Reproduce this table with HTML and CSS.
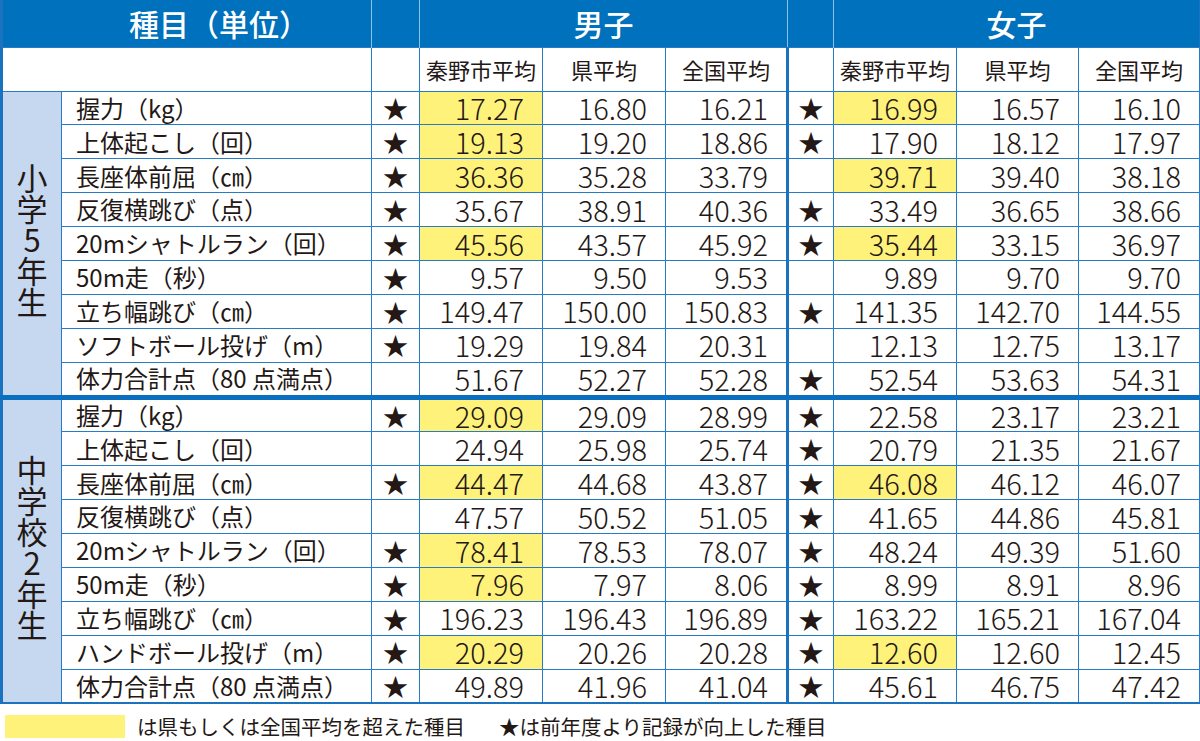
FILE: index.html
```html
<!DOCTYPE html>
<html lang="ja">
<head>
<meta charset="utf-8">
<link rel="stylesheet" href="styles.css">
</head>
<body>
<table class="grid">
  <colgroup>
    <col class="c-grp"><col class="c-name"><col class="c-star">
    <col class="c-n1"><col class="c-n2"><col class="c-n3">
    <col class="c-star2">
    <col class="c-n4"><col class="c-n5"><col class="c-n6">
  </colgroup>
  <thead>
    <tr class="hrow">
      <th colspan="2" class="h-item">種目（単位）</th>
      <th class="h-gap"></th>
      <th colspan="3" class="h-sex">男子</th>
      <th class="h-gap"></th>
      <th colspan="3" class="h-sex">女子</th>
    </tr>
    <tr class="srow">
      <td colspan="2"></td>
      <td class="star"></td>
      <td class="sub">秦野市平均</td><td class="sub">県平均</td><td class="sub">全国平均</td>
      <td class="star fstar"></td>
      <td class="sub">秦野市平均</td><td class="sub">県平均</td><td class="sub">全国平均</td>
    </tr>
  </thead>
  <tbody class="g1">
    <tr><td rowspan="9" class="grp"><span class="vt">小学5年生</span></td><td class="name">握力（kg）</td><td class="star">★</td><td class="num hl">17.27</td><td class="num">16.80</td><td class="num">16.21</td><td class="star fstar">★</td><td class="num hl">16.99</td><td class="num">16.57</td><td class="num">16.10</td></tr>
    <tr><td class="name">上体起こし（回）</td><td class="star">★</td><td class="num hl">19.13</td><td class="num">19.20</td><td class="num">18.86</td><td class="star fstar">★</td><td class="num">17.90</td><td class="num">18.12</td><td class="num">17.97</td></tr>
    <tr><td class="name">長座体前屈（㎝）</td><td class="star">★</td><td class="num hl">36.36</td><td class="num">35.28</td><td class="num">33.79</td><td class="star fstar"></td><td class="num hl">39.71</td><td class="num">39.40</td><td class="num">38.18</td></tr>
    <tr><td class="name">反復横跳び（点）</td><td class="star">★</td><td class="num">35.67</td><td class="num">38.91</td><td class="num">40.36</td><td class="star fstar">★</td><td class="num">33.49</td><td class="num">36.65</td><td class="num">38.66</td></tr>
    <tr><td class="name">20mシャトルラン（回）</td><td class="star">★</td><td class="num hl">45.56</td><td class="num">43.57</td><td class="num">45.92</td><td class="star fstar">★</td><td class="num hl">35.44</td><td class="num">33.15</td><td class="num">36.97</td></tr>
    <tr><td class="name">50m走（秒）</td><td class="star">★</td><td class="num">9.57</td><td class="num">9.50</td><td class="num">9.53</td><td class="star fstar"></td><td class="num">9.89</td><td class="num">9.70</td><td class="num">9.70</td></tr>
    <tr><td class="name">立ち幅跳び（㎝）</td><td class="star">★</td><td class="num">149.47</td><td class="num">150.00</td><td class="num">150.83</td><td class="star fstar">★</td><td class="num">141.35</td><td class="num">142.70</td><td class="num">144.55</td></tr>
    <tr><td class="name">ソフトボール投げ（m）</td><td class="star">★</td><td class="num">19.29</td><td class="num">19.84</td><td class="num">20.31</td><td class="star fstar"></td><td class="num">12.13</td><td class="num">12.75</td><td class="num">13.17</td></tr>
    <tr><td class="name">体力合計点（80 点満点）</td><td class="star"></td><td class="num">51.67</td><td class="num">52.27</td><td class="num">52.28</td><td class="star fstar">★</td><td class="num">52.54</td><td class="num">53.63</td><td class="num">54.31</td></tr>
  </tbody>
  <tbody class="g2">
    <tr><td rowspan="9" class="grp"><span class="vt">中学校2年生</span></td><td class="name">握力（kg）</td><td class="star">★</td><td class="num hl">29.09</td><td class="num">29.09</td><td class="num">28.99</td><td class="star fstar">★</td><td class="num">22.58</td><td class="num">23.17</td><td class="num">23.21</td></tr>
    <tr><td class="name">上体起こし（回）</td><td class="star"></td><td class="num">24.94</td><td class="num">25.98</td><td class="num">25.74</td><td class="star fstar">★</td><td class="num">20.79</td><td class="num">21.35</td><td class="num">21.67</td></tr>
    <tr><td class="name">長座体前屈（㎝）</td><td class="star">★</td><td class="num hl">44.47</td><td class="num">44.68</td><td class="num">43.87</td><td class="star fstar">★</td><td class="num hl">46.08</td><td class="num">46.12</td><td class="num">46.07</td></tr>
    <tr><td class="name">反復横跳び（点）</td><td class="star"></td><td class="num">47.57</td><td class="num">50.52</td><td class="num">51.05</td><td class="star fstar">★</td><td class="num">41.65</td><td class="num">44.86</td><td class="num">45.81</td></tr>
    <tr><td class="name">20mシャトルラン（回）</td><td class="star">★</td><td class="num hl">78.41</td><td class="num">78.53</td><td class="num">78.07</td><td class="star fstar">★</td><td class="num">48.24</td><td class="num">49.39</td><td class="num">51.60</td></tr>
    <tr><td class="name">50m走（秒）</td><td class="star">★</td><td class="num hl">7.96</td><td class="num">7.97</td><td class="num">8.06</td><td class="star fstar">★</td><td class="num">8.99</td><td class="num">8.91</td><td class="num">8.96</td></tr>
    <tr><td class="name">立ち幅跳び（㎝）</td><td class="star">★</td><td class="num">196.23</td><td class="num">196.43</td><td class="num">196.89</td><td class="star fstar">★</td><td class="num">163.22</td><td class="num">165.21</td><td class="num">167.04</td></tr>
    <tr><td class="name">ハンドボール投げ（m）</td><td class="star">★</td><td class="num hl">20.29</td><td class="num">20.26</td><td class="num">20.28</td><td class="star fstar">★</td><td class="num hl">12.60</td><td class="num">12.60</td><td class="num">12.45</td></tr>
    <tr><td class="name">体力合計点（80 点満点）</td><td class="star">★</td><td class="num">49.89</td><td class="num">41.96</td><td class="num">41.04</td><td class="star fstar">★</td><td class="num">45.61</td><td class="num">46.75</td><td class="num">47.42</td></tr>
  </tbody>
</table>
<div class="legend">
  <span class="swatch"></span>
  <span class="ltext">は県もしくは全国平均を超えた種目</span>
  <span class="ltext second">★は前年度より記録が向上した種目</span>
</div>
</body>
</html>
```

FILE: styles.css
```css
html, body {
  margin: 0;
  padding: 0;
  background: #ffffff;
}
body {
  width: 1200px;
  font-family: "Noto Sans CJK JP", "Noto Sans", sans-serif;
  color: #231815;
}
.grid {
  width: 1198px;
  table-layout: fixed;
  border-collapse: collapse;
  border-left: 3px solid #1b72bf;
  border-right: 1px solid #1b72bf;
  border-bottom: 2px solid #1b72bf;
}
.c-grp { width: 60px; }
.c-name { width: 310px; }
.c-star { width: 48px; }
.c-n1 { width: 123px; }
.c-n2 { width: 123px; }
.c-n3 { width: 122px; }
.c-star2 { width: 46px; }
.c-n4 { width: 123px; }
.c-n5 { width: 122px; }
.c-n6 { width: 121px; }

td, th {
  padding: 0;
  border: 1px solid #2a7bc6;
  white-space: nowrap;
}

.hrow { height: 47px; }
.hrow th {
  background: #0071bc;
  color: #ffffff;
  font-size: 30px;
  font-weight: 500;
  line-height: 1.1;
  border: none;
  border-left: 1px solid #8cc0ea;
}
.hrow th:first-child { border-left: none; }
.h-item { text-align: center; padding-left: 64px; }
.h-sex { text-align: center; }

.srow { height: 44px; }
.sub {
  font-size: 22px;
  text-align: center;
  line-height: 1.1;
}

.g1 tr, .g2 tr { height: 33.9px; }
.g2 tr:first-child td { border-top: 5px solid #0a6fbf; }

.grp {
  background: #c6d8ef;
  text-align: center;
  vertical-align: middle;
}
.vt {
  display: inline-block;
  writing-mode: vertical-rl;
  text-orientation: upright;
  font-size: 31px;
  line-height: 1;
  letter-spacing: 0;
}

.name {
  font-size: 24px;
  line-height: 1.1;
  padding-left: 14px;
  text-align: left;
}
.star {
  font-size: 25px;
  line-height: 1.1;
  text-align: center;
}
.fstar { border-left: 3px solid #1b72bf; }
.num {
  font-size: 29px;
  font-weight: 300;
  line-height: 1.1;
  text-align: right;
  padding-right: 18px;
}
.hl { background: #fff27b; }

.legend {
  display: flex;
  align-items: center;
  padding: 11px 0 0 5px;
}
.swatch {
  width: 120px;
  height: 23px;
  background: #fff27b;
}
.ltext {
  font-size: 20.5px;
  line-height: 1.1;
  margin-left: 12px;
}
.second { margin-left: 34px; }
```
